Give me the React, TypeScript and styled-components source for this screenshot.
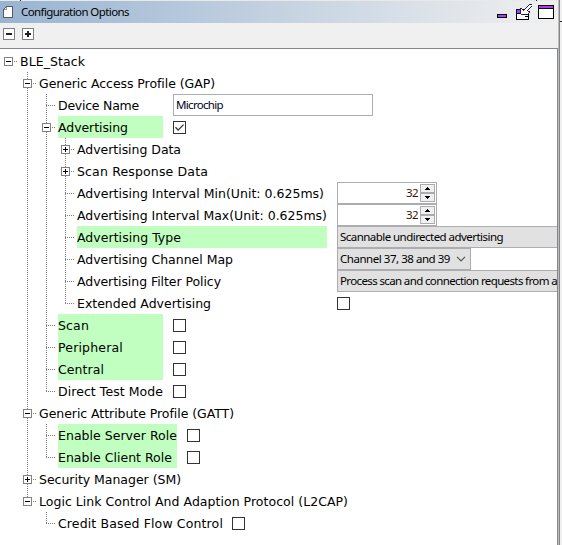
import React, { useLayoutEffect, useRef, useState } from 'react';
import styled, { createGlobalStyle, css } from 'styled-components';

const GlobalStyle = createGlobalStyle`
  * { box-sizing: border-box; }
  html, body { margin: 0; padding: 0; overflow: hidden; }
  body { background: #f0f0f0; }
`;

const controlFont = "'Noto Sans', Tahoma, sans-serif";

const Window = styled.div`
  display: flex;
  width: 562px;
  height: 545px;
  overflow: hidden;
  background: #f0f0f0;
  color: #000;
`;

const Panel = styled.section`
  display: flex;
  flex-direction: column;
  width: 558px;
  flex: none;
`;

const TopEdge = styled.div`
  display: flex;
  justify-content: space-between;
  height: 1px;
  flex: none;
  padding: 0 21px 0 20px;
  background: #e9e9e9;
`;

const Tick = styled.i`
  width: 1px;
  height: 1px;
  background: #222;
`;

const TitleBar = styled.header`
  display: flex;
  align-items: center;
  height: 22px;
  flex: none;
  padding: 0 4px 0 3px;
  background: linear-gradient(to right, #99b4d1, #f0f0f0);
`;

const Title = styled.div`
  flex: 1;
  margin-left: 7px;
  font: 11.5px/22px ${controlFont};
`;

const TitleIcons = styled.div`
  display: flex;
  height: 22px;
`;

const Toolbar = styled.div`
  display: flex;
  gap: 7px;
  height: 25px;
  flex: none;
  padding: 5px 3px;
`;

const ToolButton = styled.button`
  display: flex;
  width: 12px;
  height: 12px;
  padding: 0;
  border: 1px solid #808080;
  background: #fff;
`;

const Tree = styled.main`
  flex: 1;
  overflow: hidden;
  padding-top: 1px;
  border: solid #828790;
  border-width: 1px 1px 0 0;
  background: #fff;
`;

const Divider = styled.div`
  width: 2px;
  flex: none;
  background: #bcbcbc;
  border-right: 1px solid #858585;
`;

const Margin = styled.div`
  flex: 1;
  padding-top: 21px;
`;

const MarginTick = styled.i`
  display: block;
  height: 1px;
  background: #222;
`;

const Row = styled.div`
  display: flex;
  height: 22px;
  width: 100%;
`;

const dotsDown = 'repeating-linear-gradient(to bottom, #808080 0 1px, transparent 1px 2px)';
const dotsAcross = 'repeating-linear-gradient(to right, #808080 0 1px, transparent 1px 2px)';

type Line = 'none' | 'full' | 'half';

const Guide = styled.span<{ $line: Line; $branch?: boolean }>`
  display: flex;
  flex: none;
  width: 19px;
  height: 22px;
  padding: 7px 0 0 4px;
  background-repeat: no-repeat;
  ${({ $line, $branch }) => {
    const down = $line === 'full' ? 22 : $line === 'half' ? 12 : 0;
    return css`
      background-image: ${dotsDown}, ${$branch ? dotsAcross : 'none'};
      background-size: 1px ${down}px, 10px 1px;
      background-position: 8px 0, 8px 11px;
    `;
  }}
`;

const Expander = styled.svg`
  display: block;
  width: 9px;
  height: 9px;
`;

const Label = styled.span<{ $width?: number; $marked?: boolean }>`
  flex: none;
  width: ${({ $width }) => ($width ? `${$width}px` : 'auto')};
  height: 22px;
  margin: 0 10px 0 1px;
  background: ${({ $marked }) => ($marked ? '#c0ffc0' : 'transparent')};
  font: 12.5px/24px 'DejaVu Sans', Verdana, sans-serif;
`;

const Fitted = styled.span`
  white-space: pre;
`;

const TextInput = styled.div`
  width: 200px;
  height: 22px;
  padding-left: 2px;
  border: 1px solid #abadb3;
  background: #fff;
  color: #00001c;
  font: 11.5px/20px ${controlFont};
`;

const CheckBox = styled.span`
  display: flex;
  width: 13px;
  height: 13px;
  margin-top: 5px;
  border: 1px solid #333;
  background: #fff;
`;

const Spinner = styled.div`
  display: flex;
  justify-content: flex-end;
  width: 100px;
  height: 22px;
  padding: 1px 1px 1px 0;
  border: 1px solid #abadb3;
  background: #fff;
  color: #3a1408;
  font: 11.5px/18px ${controlFont};
`;

const SpinnerButtons = styled.div`
  display: flex;
  flex-direction: column;
  width: 15px;
  margin-left: 2px;
`;

const SpinnerButton = styled.span`
  display: flex;
  align-items: center;
  justify-content: center;
  height: 9px;
  border: 1px solid #acacac;
  background: #f0f0f0;
`;

const Combo = styled.div<{ $width: number }>`
  display: flex;
  align-items: center;
  justify-content: space-between;
  flex: none;
  width: ${({ $width }) => $width}px;
  height: 22px;
  padding: 0 4px 0 2px;
  border: 1px solid #adadb1;
  background: #e1e1e1;
  font: 11.5px/20px ${controlFont};
`;

/** Text tracked so that it occupies the given advance width. */
function Fit({ text, width }: { text: string; width: number }) {
  const ref = useRef<HTMLSpanElement>(null);
  const [spacing, setSpacing] = useState(0);
  useLayoutEffect(() => {
    if (ref.current) {
      const natural = ref.current.getBoundingClientRect().width;
      setSpacing((s) => s + (width - natural) / text.length);
    }
  }, [text, width]);
  return <Fitted ref={ref} style={{ letterSpacing: spacing }}>{text}</Fitted>;
}

const PageIcon = () => (
  <svg width="11" height="13" viewBox="0 0 11 13" shapeRendering="crispEdges">
    <path d="M3.500 .5h6v11h-9v-8z" fill="#fff" stroke="#555b63" />
    <path d="M1 3.500h2.500V1" fill="none" stroke="#999" />
  </svg>
);

const WindowIcons = () => (
  <svg width="60" height="22" viewBox="0 0 60 22" shapeRendering="crispEdges">
    <path d="M3.500 13.500h9v3h-9z" fill="#b23cf5" stroke="#000" />
    <path d="M22.500 8.500h12v10h-12z" fill="#fff" stroke="#000" />
    <path d="M23 9h4v3h-4zM31 10h3v2h-3z" fill="#b23cf5" />
    <path d="M23 12.500h4M31 15.500h3" stroke="#000" />
    <path d="M35 3h3v3l-5 5h3v2h-2v1h-7V7h2v2z" fill="#fff" />
    <path d="M35.500 3v1M34.500 4v1M33.500 5v1M32.500 6v1M31.500 7v1M30.500 8v1M29.500 9v1M37.500 5v1M36.500 6v1M35.500 7v1M34.500 8v1M33.500 9v1M26.500 7v6M27.500 7v1M28.500 8v1M36 3.500h2M34 10.500h2M35 11.500h1M34 12.500h1M27 13.500h7" stroke="#222240" />
    <path d="M44.500 4.500h15v13h-15z" fill="#fff" stroke="#000" />
    <path d="M45 5h14v2H45z" fill="#b23cf5" />
    <path d="M45 7.500h14" stroke="#000" />
  </svg>
);

const Toggle = ({ open }: { open: boolean }) => (
  <Expander viewBox="0 0 9 9" shapeRendering="crispEdges">
    <path d="M.5 .5h8v8h-8z" fill="#fff" stroke="#808080" />
    <path d={open ? 'M2 4.500h5' : 'M2 4.500h5M4.500 2v5'} stroke="#000" />
  </Expander>
);

const Check = ({ on }: { on?: boolean }) => (
  <CheckBox>
    {on && (
      <svg width="11" height="11" viewBox="0 0 11 11">
        <path d="M1.500 5.300l2.700 2.800 5.300-5.500" fill="none" stroke="#333" strokeWidth="1.300" />
      </svg>
    )}
  </CheckBox>
);

const Arrow = ({ up }: { up?: boolean }) => (
  <svg width="5" height="3" viewBox="0 0 5 3" shapeRendering="crispEdges">
    <path d={up ? 'M2 0h1v1h1v1h1v1H0V2h1V1h1z' : 'M0 0h5v1H4v1H3v1H2V2H1V1H0z'} fill="#000" />
  </svg>
);

const NumberField = ({ value }: { value: string }) => (
  <Spinner>
    <Fit text={value} width={12} />
    <SpinnerButtons>
      <SpinnerButton><Arrow up /></SpinnerButton>
      <SpinnerButton><Arrow /></SpinnerButton>
    </SpinnerButtons>
  </Spinner>
);

interface Node {
  text: string;
  fit: number;
  guides: Line[];
  open?: boolean;
  width?: number;
  marked?: boolean;
  field?: React.ReactNode;
}

const mid: Line[] = ['none', 'full', 'full'];
const deep: Line[] = ['none', 'full', 'full', 'full'];

const nodes: Node[] = [
  { text: 'BLE_Stack', fit: 65, guides: ['none'], open: true },
  { text: 'Generic Access Profile (GAP)', fit: 176, guides: ['none', 'full'], open: true },
  {
    text: 'Device Name', fit: 81, guides: mid, width: 105,
    field: <TextInput><Fit text="Microchip" width={47} /></TextInput>,
  },
  { text: 'Advertising', fit: 70, guides: mid, open: true, width: 105, marked: true, field: <Check on /> },
  { text: 'Advertising Data', fit: 104, guides: deep, open: false },
  { text: 'Scan Response Data', fit: 131, guides: deep, open: false },
  { text: 'Advertising Interval Min(Unit: 0.625ms)', fit: 247, guides: deep, width: 250, field: <NumberField value="32" /> },
  { text: 'Advertising Interval Max(Unit: 0.625ms)', fit: 250, guides: deep, width: 250, field: <NumberField value="32" /> },
  {
    text: 'Advertising Type', fit: 104, guides: deep, width: 250, marked: true,
    field: <Combo $width={240}><Fit text="Scannable undirected advertising" width={163} /></Combo>,
  },
  {
    text: 'Advertising Channel Map', fit: 156, guides: deep, width: 250,
    field: (
      <Combo $width={134}>
        <Fit text="Channel 37, 38 and 39" width={110} />
        <svg width="10" height="6" viewBox="0 0 10 6">
          <path d="M1 .8l4 4 4-4" fill="none" stroke="#555" strokeWidth="1.200" />
        </svg>
      </Combo>
    ),
  },
  {
    text: 'Advertising Filter Policy', fit: 144, guides: deep, width: 250,
    field: <Combo $width={240}><Fit text="Process scan and connection requests from a" width={217} /></Combo>,
  },
  { text: 'Extended Advertising', fit: 134, guides: ['none', 'full', 'full', 'half'], width: 250, field: <Check /> },
  { text: 'Scan', fit: 31, guides: mid, width: 105, marked: true, field: <Check /> },
  { text: 'Peripheral', fit: 65, guides: mid, width: 105, marked: true, field: <Check /> },
  { text: 'Central', fit: 46, guides: mid, width: 105, marked: true, field: <Check /> },
  { text: 'Direct Test Mode', fit: 105, guides: ['none', 'full', 'half'], width: 105, field: <Check /> },
  { text: 'Generic Attribute Profile (GATT)', fit: 195, guides: ['none', 'full'], open: true },
  { text: 'Enable Server Role', fit: 119, guides: mid, width: 119, marked: true, field: <Check /> },
  { text: 'Enable Client Role', fit: 114, guides: ['none', 'full', 'half'], width: 119, marked: true, field: <Check /> },
  { text: 'Security Manager (SM)', fit: 142, guides: ['none', 'full'], open: false },
  { text: 'Logic Link Control And Adaption Protocol (L2CAP)', fit: 309, guides: ['none', 'half'], open: true },
  { text: 'Credit Based Flow Control', fit: 165, guides: ['none', 'none', 'half'], width: 164, field: <Check /> },
];

const TreeRow = ({ node }: { node: Node }) => (
  <Row>
    {node.guides.map((line, i) => {
      const last = i === node.guides.length - 1;
      return (
        <Guide key={i} $line={line} $branch={last}>
          {last && node.open !== undefined && <Toggle open={node.open} />}
        </Guide>
      );
    })}
    <Label $width={node.width} $marked={node.marked}>
      <Fit text={node.text} width={node.fit} />
    </Label>
    {node.field}
  </Row>
);

export default function App() {
  return (
    <>
      <GlobalStyle />
      <Window>
        <Panel>
          <TopEdge><Tick /><Tick /></TopEdge>
          <TitleBar>
            <PageIcon />
            <Title><Fit text="Configuration Options" width={108} /></Title>
            <TitleIcons><WindowIcons /></TitleIcons>
          </TitleBar>
          <Toolbar>
            <ToolButton aria-label="Collapse all">
              <svg width="10" height="10" viewBox="0 0 10 10" shapeRendering="crispEdges">
                <path d="M2 5h6" stroke="#222" strokeWidth="2" />
              </svg>
            </ToolButton>
            <ToolButton aria-label="Expand all">
              <svg width="10" height="10" viewBox="0 0 10 10" shapeRendering="crispEdges">
                <path d="M2 5h6M5 2v6" stroke="#222" strokeWidth="2" />
              </svg>
            </ToolButton>
          </Toolbar>
          <Tree>
            {nodes.map((node) => <TreeRow key={node.text} node={node} />)}
          </Tree>
        </Panel>
        <Divider />
        <Margin><MarginTick /></Margin>
      </Window>
    </>
  );
}
